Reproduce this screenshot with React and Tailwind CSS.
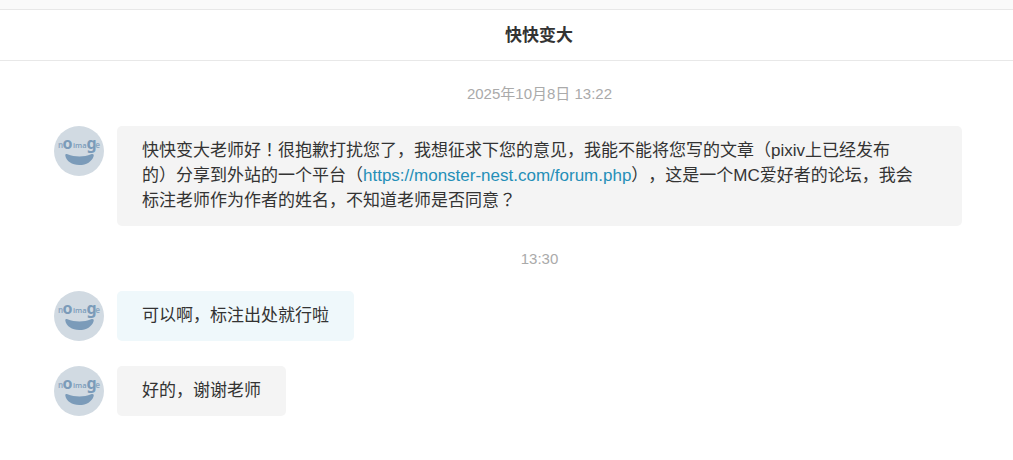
function Avatar() {
  return (
    <svg viewBox="0 0 50 50" className="size-[50px] shrink-0" role="img" aria-label="no image">
      <circle cx="25" cy="25" r="25" fill="#d1dae2" />
      <g fill="#7b9bb9" fontFamily="'Noto Sans', sans-serif" fontWeight="700">
        <text x="4" y="22" fontSize="8" fillOpacity="0.75">n</text>
        <text x="8.5" y="23" fontSize="16">o</text>
        <text x="19" y="22" fontSize="7.5" fontFamily="'Open Sans', sans-serif" fontWeight="600">ima</text>
        <text x="32.5" y="23" fontSize="16">g</text>
        <text x="41.2" y="22" fontSize="8" fillOpacity="0.75">e</text>
      </g>
      <path d="M11.3 29.5C11.3 28.2 12.2 27.8 13.5 28.3C21 31.2 30 31.2 37 28.3C39 27.5 40.2 28.3 39.6 30.2C38 35.5 32.5 39 25.3 39C18 39 12 35 11.3 29.5Z" fill="#7b9bb9" />
    </svg>
  )
}

function Mark({ children }) {
  return <span lang="ja" className="font-['Noto_Sans_CJK_JP',sans-serif] leading-none">{children}</span>
}

function Message({ tone, wide, children }) {
  return (
    <li className="flex items-start gap-[13px]">
      <Avatar />
      <div className={`min-w-0 rounded-[5px] px-[25px] pt-[12px] pb-[13px] text-[17px] leading-[25px] ${wide ? 'grow' : ''} ${tone === 'reply' ? 'bg-[#eff8fb]' : 'bg-[#f4f4f4]'}`}>
        <p>{children}</p>
      </div>
    </li>
  )
}

function Time({ children }) {
  return (
    <li className="flex h-[15px] items-center justify-center pt-[2px] pl-[63px] text-[15px] text-[#aaa]">
      <time>{children}</time>
    </li>
  )
}

export default function App() {
  return (
    <div className="min-h-screen bg-white font-['Liberation_Sans','Noto_Sans_CJK_SC',sans-serif] text-[#333] [text-spacing-trim:space-all]" lang="zh-CN">
      <div className="h-[10px] border-b border-[#e8e8e8] bg-[#fafafa]" />
      <header className="flex h-[51px] items-center justify-center border-b border-[#e8e8e8] pl-[65px]">
        <h1 className="text-[17px] font-bold leading-[25px]">快快变大</h1>
      </header>
      <main className="pt-[25px] pr-[51px] pl-[54px]">
        <ol className="flex flex-col gap-[25px]">
          <Time>2025年10月8日 13:22</Time>
          <Message wide>
            快快变大老师好<Mark>！</Mark>很抱歉打扰您了，我想征求下您的意见，我能不能将您写的文章（pixiv上已经发布<br />
            的）分享到外站的一个平台（<a href="https://monster-nest.com/forum.php" className="text-[#258fb8]">https://monster-nest.com/forum.php</a>），这是一个MC爱好者的论坛，我会<br />
            标注老师作为作者的姓名，不知道老师是否同意<Mark>？</Mark>
          </Message>
          <Time>13:30</Time>
          <Message tone="reply">可以啊，标注出处就行啦</Message>
          <Message>好的，谢谢老师</Message>
        </ol>
      </main>
    </div>
  )
}
